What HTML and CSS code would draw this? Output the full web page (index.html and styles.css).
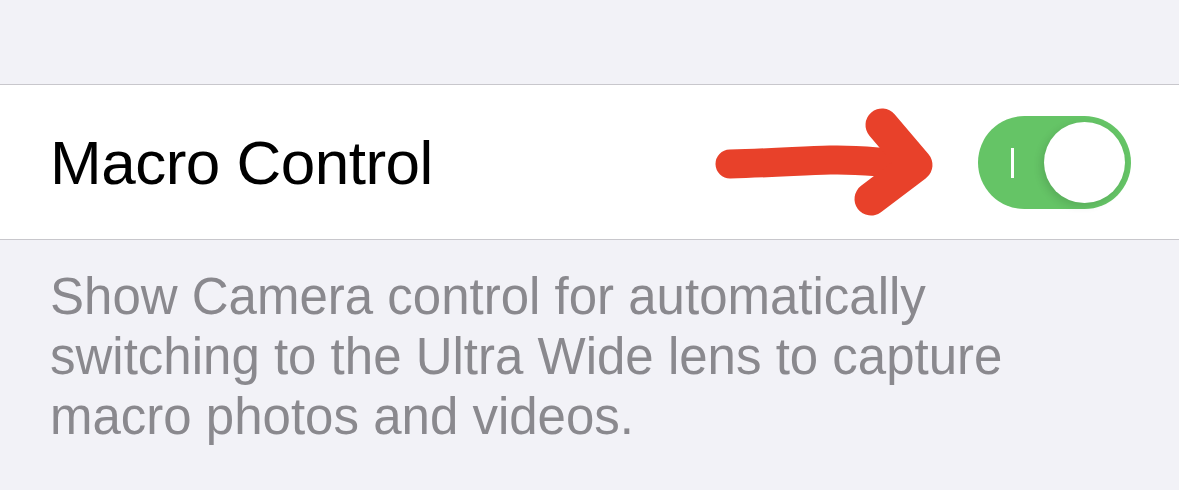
FILE: index.html
```html
<!DOCTYPE html>
<html>
<head>
<meta charset="utf-8">
<link rel="stylesheet" href="styles.css">
</head>
<body>
<div class="page">
  <div class="top-gap"></div>
  <div class="row">
    <span class="label">Macro Control</span>
    <div class="toggle">
      <span class="toggle-mark"></span>
      <span class="knob"></span>
    </div>
  </div>
  <p class="footer">Show Camera control for automatically switching to the Ultra Wide lens to capture macro photos and videos.</p>
  <svg class="arrow" width="1179" height="490" viewBox="0 0 1179 490">
    <g fill="none" stroke="#e8412a" stroke-linecap="round" stroke-linejoin="round">
      <path stroke-width="29" d="M730 164 C 770 163, 800 161, 830 160 C 860 159, 880 163, 912 164"/>
      <path stroke-width="33" d="M882 125 L 916 165 L 871 199"/>
    </g>
  </svg>
</div>
</body>
</html>
```
FILE: styles.css
```css
html, body {
  margin: 0;
  padding: 0;
  background: #f2f2f7;
}
.page {
  position: relative;
  width: 1179px;
  height: 490px;
  overflow: hidden;
  font-family: "Liberation Sans", Arial, sans-serif;
}
.top-gap {
  height: 84px;
}
.row {
  height: 154px;
  background: #ffffff;
  border-top: 1px solid #c8c7cc;
  border-bottom: 1px solid #c8c7cc;
  display: flex;
  align-items: center;
  justify-content: space-between;
  padding: 0 48px 0 50px;
}
.label {
  font-size: 62px;
  color: #000;
  letter-spacing: -0.5px;
}
.toggle {
  position: relative;
  width: 153px;
  height: 93px;
  border-radius: 47px;
  background: #65c466;
  display: flex;
  align-items: center;
  justify-content: flex-end;
  padding-right: 6px;
  box-sizing: border-box;
}
.toggle-mark {
  position: absolute;
  left: 33px;
  top: 32px;
  width: 3px;
  height: 30px;
  background: #fff;
}
.knob {
  width: 81px;
  height: 81px;
  border-radius: 50%;
  background: #fff;
  box-shadow: -3px 3px 8px rgba(0,0,0,0.12);
}
.footer {
  margin: 0;
  padding: 27px 50px 0 50px;
  font-size: 51px;
  line-height: 60px;
  color: #8a898e;
  width: 980px;
}
.arrow {
  position: absolute;
  left: 0;
  top: 0;
  pointer-events: none;
}
```
